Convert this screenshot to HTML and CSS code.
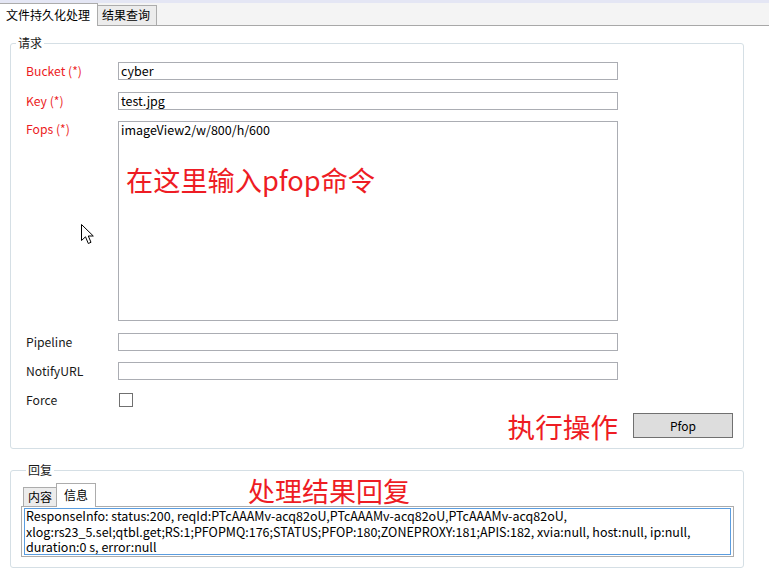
FILE: index.html
```html
<!DOCTYPE html>
<html>
<head>
<meta charset="utf-8">
<link rel="stylesheet" href="styles.css">
</head>
<body>
<div class="window">
  <div class="topstrip"></div>
  <div class="tabbar">
    <div class="tab tab-active">文件持久化处理</div>
    <div class="tab tab-inactive">结果查询</div>
  </div>
  <div class="page">
    <fieldset class="group group-request">
      <legend class="legend">请求</legend>
      <div class="form">
        <div class="label req row-bucket">Bucket (*)</div>
        <div class="input row-bucket">cyber</div>

        <div class="label req row-key">Key (*)</div>
        <div class="input row-key">test.jpg</div>

        <div class="label req label-top row-fops">Fops (*)
          <svg class="cursor" width="14" height="21" viewBox="0 0 14 21">
            <path d="M0.5 0.5 L0.5 16.5 L4.5 12.8 L7.3 19.5 L10 18.3 L7.3 12 L12.3 12 Z" fill="#fff" stroke="#000" stroke-width="1" stroke-linejoin="miter"/>
          </svg>
        </div>
        <div class="input textarea row-fops">
          <div class="fops-text">imageView2/w/800/h/600</div>
          <div class="note note-fops">在这里输入pfop命令</div>
        </div>

        <div class="label row-pipe">Pipeline</div>
        <div class="input row-pipe"></div>

        <div class="label row-notify">NotifyURL</div>
        <div class="input row-notify"></div>

        <div class="label row-force">Force</div>
        <div class="checkbox-cell row-force"><span class="checkbox"></span></div>
      </div>
      <div class="action-row">
        <span class="note note-action">执行操作</span>
        <button class="btn">Pfop</button>
      </div>
    </fieldset>

    <fieldset class="group group-reply">
      <legend class="legend">回复</legend>
      <div class="reply-tabs">
        <div class="rtab rtab-inactive">内容</div>
        <div class="rtab rtab-active">信息</div>
        <div class="note note-reply">处理结果回复</div>
      </div>
      <div class="reply-panel">
        <div class="reply-box">
          <div class="reply-text">ResponseInfo: status:200, reqId:PTcAAAMv-acq82oU,PTcAAAMv-acq82oU,PTcAAAMv-acq82oU,<br>xlog:rs23_5.sel;qtbl.get;RS:1;PFOPMQ:176;STATUS;PFOP:180;ZONEPROXY:181;APIS:182, xvia:null, host:null, ip:null,<br>duration:0 s, error:null</div>
        </div>
      </div>
    </fieldset>
  </div>
</div>
</body>
</html>
```

FILE: styles.css
```css
html, body {
  margin: 0;
  padding: 0;
  background: #ffffff;
}
body {
  width: 769px;
  height: 573px;
  overflow: hidden;
  font-family: "Noto Sans CJK SC", "Noto Sans", sans-serif;
  font-size: 12px;
  color: #1a1a1a;
}
.window {
  width: 769px;
  height: 573px;
  background: #ffffff;
}
.topstrip {
  height: 3px;
  background: #e4e6f4;
}
.tabbar {
  height: 22px;
  background: #f4f4f4;
  border-bottom: 1px solid #a8a8a8;
  display: flex;
  align-items: flex-end;
}
.tab {
  box-sizing: border-box;
  line-height: 18px;
  white-space: nowrap;
}
.tab-active {
  height: 23px;
  margin-bottom: -1px;
  padding: 2px 6px 0 6px;
  width: 98px;
  background: #ffffff;
  border: 1px solid #acacac;
  border-bottom: none;
  border-left: none;
  color: #000;
}
.tab-inactive {
  height: 20px;
  width: 59px;
  padding: 0 0 0 4px;
  background: #ececec;
  border: 1px solid #acacac;
  border-left: none;
  border-bottom: none;
  color: #000;
}
.page {
  padding: 10px 25px 0 10px;
}
.group {
  margin: 0;
  border: 1px solid #d5dfe5;
  border-radius: 3px;
  min-width: 0;
}
.legend {
  margin-left: 5px;
  padding: 0 2px;
  line-height: 14px;
  color: #1a1a1a;
}
.group-request {
  padding: 0 10px 10px 0;
}
.form {
  display: grid;
  grid-template-columns: 107px 500px;
  row-gap: 0;
  padding-top: 12px;
}
.label {
  padding-left: 15px;
  line-height: 18px;
  position: relative;
  white-space: nowrap;
  font-size: 12.2px;
}
.req {
  color: #ec1c24;
}
.label-top {
  margin-top: -1px;
}
.input {
  box-sizing: border-box;
  height: 18px;
  border: 1px solid #abadb3;
  padding: 0 2px;
  line-height: 16px;
  color: #000;
  white-space: nowrap;
  font-size: 12.5px;
}
.row-key { margin-top: 12px; }
.label.row-key { margin-top: 12px; }
.row-fops { margin-top: 11px; }
.label.row-fops { margin-top: 10px; }
.textarea {
  height: 200px;
  padding-top: 0;
}
.row-pipe { margin-top: 12px; }
.row-notify { margin-top: 11px; }
.row-force { margin-top: 13px; }
.label.row-force { margin-top: 11px; }
.cursor {
  position: absolute;
  left: 70px;
  top: 104px;
}
.note {
  color: #ee1c24;
  font-size: 28px;
  line-height: 32px;
  white-space: nowrap;
}
.note-fops {
  font-size: 27.2px;
  margin-top: 25px;
  margin-left: 5px;
}
.checkbox-cell {
  height: 14px;
}
.checkbox {
  display: block;
  box-sizing: border-box;
  width: 14px;
  height: 14px;
  margin-left: 1px;
  border: 1px solid #707070;
  background: #fff;
}
.action-row {
  display: flex;
  justify-content: flex-end;
  align-items: center;
  margin-top: 4px;
  height: 25px;
}
.note-action {
  font-size: 27.6px;
  margin-right: 15px;
  margin-top: 0;
}
.btn {
  box-sizing: border-box;
  width: 100px;
  height: 25px;
  margin: 0;
  padding: 0;
  background: #dddddd;
  border: 1px solid #707070;
  font-family: inherit;
  font-size: 12px;
  color: #000;
}
.group-reply {
  margin-top: 14px;
  padding: 0 9px 10px 10px;
}
.reply-tabs {
  display: flex;
  align-items: flex-end;
  height: 23px;
  margin-top: 6px;
}
.rtab {
  box-sizing: border-box;
  line-height: 18px;
  white-space: nowrap;
  color: #000;
}
.rtab-inactive {
  margin-left: 2px;
  width: 33px;
  height: 19px;
  padding-left: 4px;
  background: #ececec;
  border: 1px solid #acacac;
  border-bottom: none;
  border-right: none;
}
.rtab-active {
  width: 40px;
  height: 24px;
  margin-bottom: -1px;
  padding: 2px 0 0 7px;
  background: #fff;
  border: 1px solid #acacac;
  border-bottom: none;
  position: relative;
  z-index: 1;
}
.note-reply {
  margin-left: 152px;
  font-size: 27px;
  line-height: 30px;
  margin-bottom: 0;
}
.reply-panel {
  border: 1px solid #acacac;
  padding: 1px 2px;
}
.reply-box {
  box-sizing: border-box;
  height: 47px;
  border: 1px solid #5b9ddf;
  padding: 0 0 0 1px;
  color: #000;
  white-space: nowrap;
}
.reply-text {
  margin-top: -1px;
  line-height: 15.5px;
  font-size: 12.5px;
}
```
